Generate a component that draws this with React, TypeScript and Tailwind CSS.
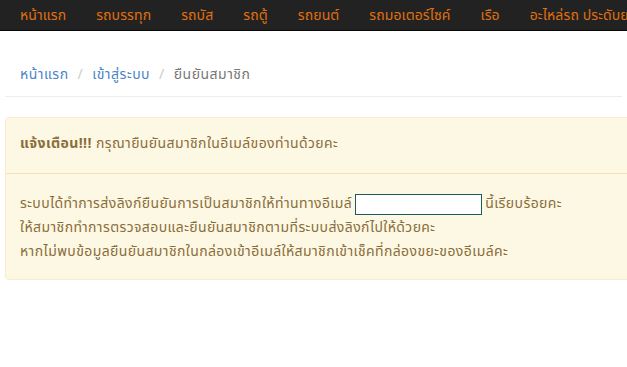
import React from "react";

const navItems = ["หน้าแรก", "รถบรรทุก", "รถบัส", "รถตู้", "รถยนต์", "รถมอเตอร์ไซค์", "เรือ", "อะไหล่รถ ประดับยนต์"];

export default function App() {
  return (
    <div className="min-h-[367px] w-[627px] overflow-hidden bg-white" style={{ fontFamily: "Tahoma, 'Noto Sans Thai', 'Noto Sans', 'Liberation Sans', sans-serif" }}>
      <nav className="flex h-[31px] items-center overflow-hidden whitespace-nowrap border-b border-[#080808] bg-[#222222] pl-[5px]">
        {navItems.map((t) => (
          <a key={t} className="shrink-0 px-[15px] text-[14px] tracking-[0.1px] text-[#e0700f]">{t}</a>
        ))}
      </nav>
      <div className="px-[5px]">
        <div className="flex h-[66px] items-center gap-[9px] border-b border-[#eeeeee] px-[15px] pt-[22px] text-[14px] tracking-[0.5px]">
          <span className="text-[#4a84c9]">หน้าแรก</span>
          <span className="text-[#cccccc]">/</span>
          <span className="text-[#4a84c9]">เข้าสู่ระบบ</span>
          <span className="text-[#cccccc]">/</span>
          <span className="text-[#777777]">ยืนยันสมาชิก</span>
        </div>
        <div className="mt-[20px] -mr-[20px] rounded-[4px] border border-[#faebcc] bg-[#fcf8e3] px-[14px] pb-[15px] pt-[14px] text-[14px] tracking-[0.4px] text-[#8a6d3b]">
          <p className="leading-[24px]">
            <b>แจ้งเตือน!!!</b> กรุณายืนยันสมาชิกในอีเมล์ของท่านด้วยคะ
          </p>
          <hr className="mb-[18px] mt-[17px] border-t border-[#f7e1b5] -mx-[14px]" />
          <div className="leading-[24px]">
            <div className="flex h-[24px] items-center whitespace-nowrap">
              <span>ระบบได้ทำการส่งลิงก์ยืนยันการเป็นสมาชิกให้ท่านทางอีเมล์</span>
              <input className="mx-[3px] h-[21px] w-[127px] shrink-0 border border-[#1d5c5c] bg-white" readOnly />
              <span>นี้เรียบร้อยคะ</span>
            </div>
            <div>ให้สมาชิกทำการตรวจสอบและยืนยันสมาชิกตามที่ระบบส่งลิงก์ไปให้ด้วยคะ</div>
            <div>หากไม่พบข้อมูลยืนยันสมาชิกในกล่องเข้าอีเมล์ให้สมาชิกเข้าเช็คที่กล่องขยะของอีเมล์คะ</div>
          </div>
        </div>
      </div>
    </div>
  );
}
